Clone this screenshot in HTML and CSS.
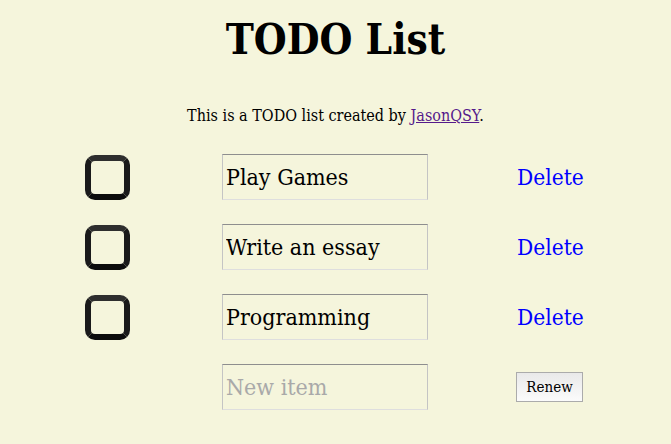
FILE: index.html
```html
<!DOCTYPE html>
<html>
<head>
<meta charset="utf-8">
<title>TODO List</title>
<link rel="stylesheet" href="styles.css">
</head>
<body>
<h1 class="title">TODO List</h1>
<p class="intro">This is a TODO list created by <a class="author" href="#">JasonQSY</a>.</p>
<div class="list">
  <span class="check"></span>
  <div class="cell"><input class="item" type="text" value="Play Games"></div>
  <a class="del" href="#">Delete</a>

  <span class="check"></span>
  <div class="cell"><input class="item" type="text" value="Write an essay"></div>
  <a class="del" href="#">Delete</a>

  <span class="check"></span>
  <div class="cell"><input class="item" type="text" value="Programming"></div>
  <a class="del" href="#">Delete</a>

  <span class="empty"></span>
  <div class="cell"><input class="item" type="text" placeholder="New item"></div>
  <div><button class="renew" type="button">Renew</button></div>
</div>
</body>
</html>
```
FILE: styles.css
```css
html, body {
  background: #f5f5dc;
}
body {
  margin: 8px;
  font-family: "DejaVu Serif Condensed", "DejaVu Serif", serif;
  color: #000;
}
.title {
  margin: 6px 0 0;
  font-size: 42px;
  line-height: 52px;
  font-weight: bold;
  text-align: center;
}
.intro {
  margin: 40px 0 0;
  font-size: 16px;
  line-height: 20px;
  text-align: center;
}
.author {
  color: #551a8b;
  text-decoration: underline;
}
.list {
  margin-top: 28px;
  padding-left: 77px;
  display: grid;
  grid-template-columns: 137px 295px auto;
  row-gap: 24px;
  align-items: center;
}
.check {
  display: block;
  box-sizing: border-box;
  width: 45px;
  height: 45px;
  border: 6px solid #1a1a1a;
  border-radius: 10px;
  background: #f5f5dc;
  border-top-color: #2e2e2e;
  border-bottom-color: #0c0c0c;
}
.cell {
  display: flex;
}
.item {
  box-sizing: border-box;
  width: 206px;
  height: 46px;
  margin: 0;
  padding: 0 3px;
  border: 1px solid #c4c4c4;
  border-top-color: #8e8e8e;
  border-bottom-color: #dedede;
  background: #f5f5dc;
  font-family: "DejaVu Serif Condensed", "DejaVu Serif", serif;
  font-size: 23px;
  color: #000;
  outline: none;
}
.item::placeholder {
  color: #a9a9a9;
}
.del {
  color: #0000ff;
  text-decoration: none;
  font-size: 22.5px;
  line-height: 30px;
}
.renew {
  box-sizing: border-box;
  width: 67px;
  height: 30px;
  margin: 0 0 0 -1px;
  padding: 0;
  border: 1px solid #ababab;
  background: linear-gradient(#e9e9e9, #fbfbfb);
  font-family: "DejaVu Serif Condensed", "DejaVu Serif", serif;
  font-size: 15px;
  color: #000;
}
```
